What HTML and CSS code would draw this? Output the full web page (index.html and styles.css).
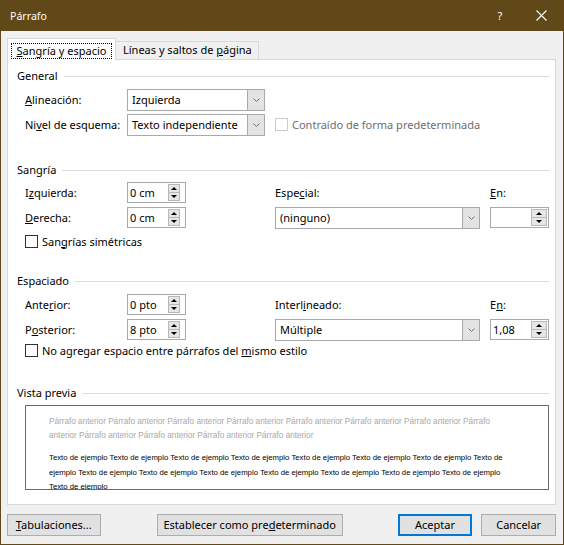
FILE: index.html
```html
<!DOCTYPE html>
<html>
	<head>
		<meta charset="utf-8" />
		<title>Párrafo</title>
		<link rel="stylesheet" href="styles.css">
	</head>

	<body>
		<div class="window">
			<div class="titlebar">
				<span class="title">Párrafo</span>
				<span class="help">?</span>
				<span class="close">
					<svg width="11" height="11" viewBox="0 0 11 11"><path d="M0.5 0.5 L10.5 10.5 M10.5 0.5 L0.5 10.5" stroke="#fff" stroke-width="1.1" fill="none"/></svg>
				</span>
			</div>
			<div class="content">
				<div class="tabs">
					<div class="tab active"><span class="focus"><u>S</u>angría y espacio</span></div>
					<div class="tab">Líneas y saltos de <u>p</u>ágina</div>
				</div>
				<div class="panel">
					<!-- General -->
					<div class="group-title first"><span>General</span></div>
					<div class="grid">
						<div class="lbl"><u>A</u>lineación:</div>
						<div class="select"><span class="val">Izquierda</span><span class="drop"><svg width="7" height="4"><polyline points="0.5,0.5 3.5,3.5 6.5,0.5" stroke="#707070" fill="none"/></svg></span></div>
						<div></div>
						<div></div>
						<div class="lbl">Ni<u>v</u>el de esquema:</div>
						<div class="select"><span class="val">Texto independiente</span><span class="drop"><svg width="7" height="4"><polyline points="0.5,0.5 3.5,3.5 6.5,0.5" stroke="#707070" fill="none"/></svg></span></div>
						<div class="check disabled span2"><span class="box"></span><span>Contraído de forma predeterminada</span></div>
					</div>

					<!-- Sangría -->
					<div class="group-title sangria"><span>Sangría</span></div>
					<div class="grid tight">
						<div class="lbl">I<u>z</u>quierda:</div>
						<div class="spin"><span class="val">0 cm</span><span class="arrows"><i class="up"></i><i class="down"></i></span></div>
						<div class="lbl">Espe<u>c</u>ial:</div>
						<div class="lbl"><u>E</u>n:</div>
						<div class="lbl"><u>D</u>erecha:</div>
						<div class="spin"><span class="val">0 cm</span><span class="arrows"><i class="up"></i><i class="down"></i></span></div>
						<div class="select wide"><span class="val">(ninguno)</span><span class="drop"><svg width="7" height="4"><polyline points="0.5,0.5 3.5,3.5 6.5,0.5" stroke="#707070" fill="none"/></svg></span></div>
						<div class="spin right"><span class="val"></span><span class="arrows"><i class="up"></i><i class="down"></i></span></div>
					</div>
					<div class="check-row"><div class="check"><span class="box"></span><span>San<u>g</u>rías simétricas</span></div></div>

					<!-- Espaciado -->
					<div class="group-title espaciado"><span>Espaciado</span></div>
					<div class="grid">
						<div class="lbl">Ante<u>r</u>ior:</div>
						<div class="spin"><span class="val">0 pto</span><span class="arrows"><i class="up"></i><i class="down"></i></span></div>
						<div class="lbl">Interl<u>i</u>neado:</div>
						<div class="lbl">E<u>n</u>:</div>
						<div class="lbl">P<u>o</u>sterior:</div>
						<div class="spin"><span class="val">8 pto</span><span class="arrows"><i class="up"></i><i class="down"></i></span></div>
						<div class="select wide"><span class="val">Múltiple</span><span class="drop"><svg width="7" height="4"><polyline points="0.5,0.5 3.5,3.5 6.5,0.5" stroke="#707070" fill="none"/></svg></span></div>
						<div class="spin right"><span class="val">1,08</span><span class="arrows"><i class="up"></i><i class="down"></i></span></div>
					</div>
					<div class="check-row short"><div class="check"><span class="box"></span><span>No agregar espacio entre párrafos del <u>m</u>ismo estilo</span></div></div>

					<!-- Vista previa -->
					<div class="group-title preview-title"><span>Vista previa</span></div>
					<div class="preview">
						<div class="prev-before">
							<div>Párrafo anterior Párrafo anterior Párrafo anterior Párrafo anterior Párrafo anterior Párrafo anterior Párrafo anterior Párrafo</div>
							<div>anterior Párrafo anterior Párrafo anterior Párrafo anterior Párrafo anterior</div>
						</div>
						<div class="prev-sample">
							<div>Texto de ejemplo Texto de ejemplo Texto de ejemplo Texto de ejemplo Texto de ejemplo Texto de ejemplo Texto de ejemplo Texto de</div>
							<div>ejemplo Texto de ejemplo Texto de ejemplo Texto de ejemplo Texto de ejemplo Texto de ejemplo Texto de ejemplo Texto de ejemplo</div>
							<div>Texto de ejemplo</div>
						</div>
					</div>
				</div>
				<div class="buttons">
					<div class="btn tabs-btn"><u>T</u>abulaciones...</div>
					<div class="btn default-btn">Establecer como pre<u>d</u>eterminado</div>
					<div class="btn ok-btn">Aceptar</div>
					<div class="btn cancel-btn">Cancelar</div>
				</div>
			</div>
		</div>
	</body>
</html>
```

FILE: styles.css
```css
* {
	padding: 0px;
	margin: 0px;
	box-sizing: border-box;
}
body {
	font-family: "Noto Sans", "Segoe UI", sans-serif;
	font-size: 11px;
	color: #000;
	background: #fff;
}
u {
	text-underline-offset: 1px;
}
.window {
	width: 564px;
	height: 545px;
	border: 1px solid #614818;
	border-top: none;
	background-color: #f0f0f0;
	display: flex;
	flex-direction: column;
}
.titlebar {
	height: 31px;
	background-color: #614818;
	color: #fff;
	display: flex;
	align-items: center;
	padding-left: 9px;
	flex: none;
}
.title {
	font-size: 10.6px;
}
.help {
	margin-left: auto;
	font-size: 11px;
	width: 12px;
	text-align: center;
}
.close {
	display: flex;
	margin-left: 30px;
	margin-right: 16px;
}
.content {
	flex: 1;
	padding: 7px 7px 0 6px;
}

/* tabs */
.tabs {
	display: flex;
	align-items: flex-end;
	height: 21px;
}
.tab {
	height: 18px;
	width: 143px;
	border: 1px solid #d9d9d9;
	border-left: none;
	border-bottom: none;
	padding-left: 7px;
	line-height: 16px;
	background-color: #f0f0f0;
}
.tab.active {
	width: 109px;
	height: 22px;
	margin-bottom: -1px;
	border-left: 1px solid #d9d9d9;
	background-color: #fff;
	position: relative;
	z-index: 1;
	padding: 4px 0 0 3px;
}
.focus {
	display: block;
	width: 101px;
	height: 16px;
	border: 1px dotted #000;
	line-height: 13px;
	text-align: center;
}
.panel {
	height: 446px;
	border: 1px solid #d9d9d9;
	background-color: #fff;
	padding: 0 6px 0 9px;
}

/* group titles */
.group-title {
	display: flex;
	align-items: center;
	height: 14px;
	line-height: 14px;
}
.group-title:after {
	content: "";
	flex: 1;
	height: 1px;
	margin-left: 6px;
	background-color: #dcdcdc;
}
.group-title.first { margin-top: 9px; }
.group-title.sangria { margin-top: 26px; }
.group-title.espaciado { margin-top: 22px; }
.group-title.preview-title { margin-top: 27px; }

/* rows */
.grid {
	display: grid;
	grid-template-columns: 102px 148px 215px 58px;
	grid-auto-rows: 25px;
	align-items: center;
	margin: 4px 0 0 8px;
}
.grid.tight {
	margin-top: 3px;
}
.lbl {
	white-space: nowrap;
}
.select {
	display: flex;
	width: 138px;
	height: 22px;
	border: 1px solid #a9a9a9;
	background-color: #fff;
}
.select.wide {
	width: 205px;
}
.select .val {
	flex: 1;
	padding-left: 4px;
	line-height: 20px;
	white-space: nowrap;
}
.select .drop {
	width: 17px;
	background-color: #e3e3e3;
	border-left: 1px solid #a9a9a9;
	display: flex;
	align-items: center;
	justify-content: center;
}
.spin {
	display: flex;
	width: 59px;
	height: 21px;
	border: 1px solid #a9a9a9;
	background-color: #fff;
}
.spin .val {
	flex: 1;
	padding-left: 2px;
	line-height: 19px;
}
.arrows {
	width: 12px;
	margin: 1px 5px 1px 0;
	display: flex;
	flex-direction: column;
	border: 1px solid #b9b9b9;
	background-color: #e6e6e6;
}
.spin.right .arrows {
	width: 16px;
	margin-right: 1px;
}
.arrows i {
	flex: 1;
	display: flex;
	align-items: center;
	justify-content: center;
}
.arrows i.up {
	border-bottom: 1px solid #b9b9b9;
}
.arrows i:before {
	content: "";
	width: 0;
	height: 0;
	border-left: 3px solid transparent;
	border-right: 3px solid transparent;
}
.arrows i.up:before {
	border-bottom: 3px solid #000;
}
.arrows i.down:before {
	border-top: 3px solid #000;
}

/* checkboxes */
.check {
	display: flex;
	align-items: center;
	white-space: nowrap;
}
.check .box {
	width: 13px;
	height: 13px;
	border: 1px solid #333;
	background-color: #fff;
	margin-right: 4px;
}
.check.disabled {
	color: #6d6d6d;
}
.check.disabled .box {
	border-color: #cccccc;
}
.span2 {
	grid-column: span 2;
}
.check-row {
	height: 22px;
	display: flex;
	align-items: center;
	padding-left: 8px;
}
.check-row.short {
	height: 17px;
}

/* preview */
.preview {
	margin: 5px 0 0 8px;
	width: 524px;
	height: 85px;
	border: 1px solid #6a6a6a;
	overflow: hidden;
	padding: 9px 0 0 23px;
	font-family: "Liberation Sans", Arial, sans-serif;
	white-space: nowrap;
}
.prev-before {
	color: #a8a8a8;
	font-size: 8.2px;
	line-height: 14px;
}
.prev-sample {
	margin-top: 8px;
	font-size: 7.75px;
	line-height: 14.5px;
}

/* buttons */
.buttons {
	display: flex;
	margin-top: 9px;
}
.btn {
	height: 22px;
	border: 1px solid #adadad;
	background-color: #e1e1e1;
	text-align: center;
	line-height: 20px;
	white-space: nowrap;
}
.tabs-btn {
	width: 94px;
}
.default-btn {
	width: 187px;
	margin-left: 56px;
}
.ok-btn {
	width: 75px;
	margin-left: 55px;
	border: 2px solid #0078d7;
	line-height: 18px;
}
.cancel-btn {
	width: 75px;
	margin-left: 9px;
}
```
